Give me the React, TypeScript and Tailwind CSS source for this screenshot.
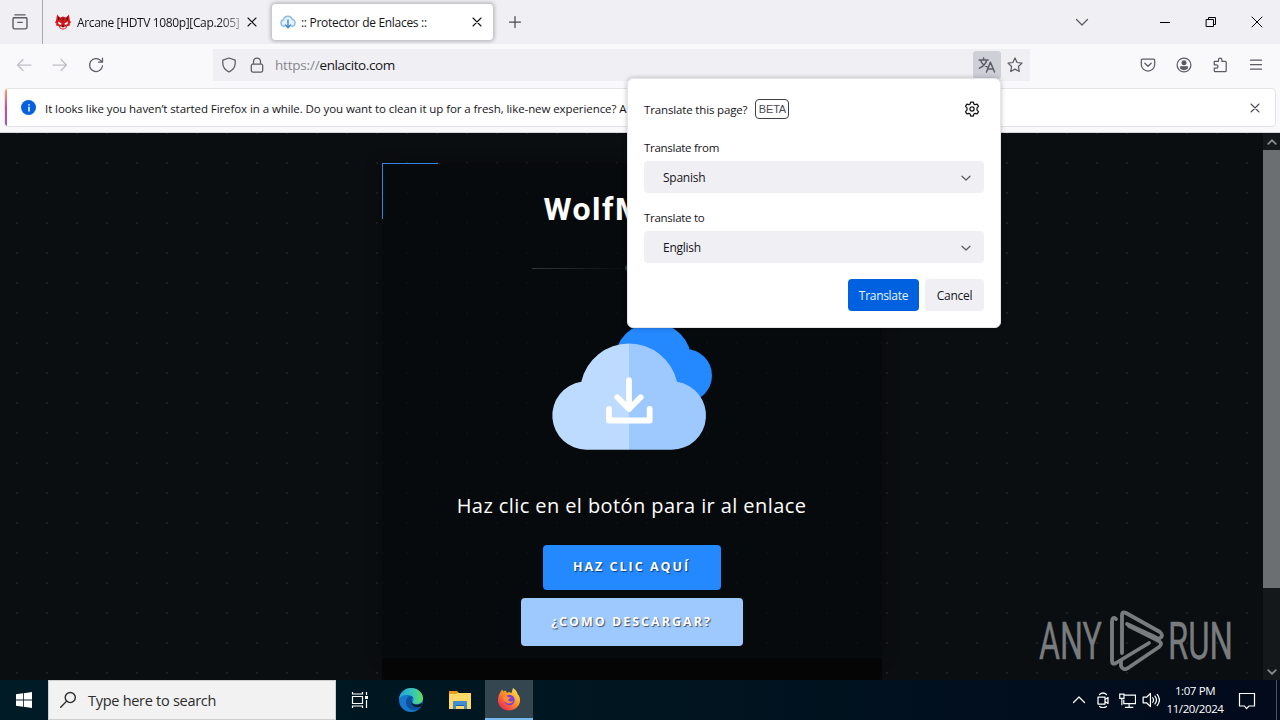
import type { ReactNode } from "react";

const uiFont = "font-['Open_Sans','Noto_Sans',sans-serif]";

function Icon({ size = 16, className = "", children }: { size?: number; className?: string; children: ReactNode }) {
  return (
    <svg
      width={size}
      height={size}
      viewBox="0 0 16 16"
      fill="none"
      stroke="currentColor"
      strokeWidth="1.25"
      strokeLinecap="round"
      strokeLinejoin="round"
      className={`shrink-0 ${className}`}
    >
      {children}
    </svg>
  );
}

function CloseIcon({ size = 16 }: { size?: number }) {
  return (
    <Icon size={size}>
      <path d="M4 4l8 8M12 4l-8 8" strokeWidth="1.100" />
    </Icon>
  );
}

function WolfIcon() {
  return (
    <svg width="16" height="16" viewBox="0 0 16 16" className="shrink-0">
      <path d="M2 .5l3 3 3-1 3 1 3-3 .8 5.500L16 9l-1.500.5.5 2-2.500.5L11 14.500l-3 1.300-3-1.300L3.500 12 1 11.500l.5-2L0 9l1.200-3z" fill="#d0191e" />
      <path d="M3 7.500l3.500 2L6 11 3.500 10zM13 7.500l-3.500 2L10 11l2.500-1zM4.500 12.500l2 .3 1.500 1 1.500-1 2-.3-2 2H6.500z" fill="#fff" />
      <path d="M6.800 11.500h2.400L8 13.200zM3 2.800l1.800 2L3 6.500zM13 2.800l-1.800 2 1.800 1.700zM7.500 4h1l-.5 4z" fill="#3d0a0c" />
    </svg>
  );
}

function CloudFavicon() {
  return (
    <svg width="16" height="16" viewBox="0 0 16 16" className="shrink-0" fill="none" strokeLinecap="round">
      <path d="M4.500 12.200H4A3.300 3.300 0 0 1 3.500 5.700a4.600 4.600 0 0 1 8.800-.3 3.500 3.500 0 0 1 .2 6.800h-1" stroke="#8dbcec" strokeWidth="1.400" fill="#eaf3fd" />
      <path d="M8 6v7M5.500 11L8 13.700l2.500-2.700" stroke="#3f86d2" strokeWidth="1.400" />
    </svg>
  );
}

function TabBar() {
  return (
    <div className="flex h-[44px] shrink-0 bg-[#f0f0f4] text-[#15141a]">
      <div className="flex w-[43px] shrink-0 items-center justify-center border-r border-[#a9a9b0] pr-[2px] text-[#5b5b66]">
        <Icon size={18}>
          <path d="M3.500 1.700h9M2.200 4.200h11.600M3 4.200h10a1.200 1.200 0 0 1 1.200 1.200v7.200a1.500 1.500 0 0 1-1.500 1.500H3.300a1.500 1.500 0 0 1-1.500-1.500V5.400A1.200 1.200 0 0 1 3 4.200zM6 8.300h4" />
        </Icon>
      </div>
      <div className="flex w-[221px] shrink-0 items-center pl-[12px]">
        <WolfIcon />
        <div className="ml-[6px] w-[167px] pt-[2px] text-[12px] tracking-[-0.36px] whitespace-nowrap [mask-image:linear-gradient(to_right,black_142px,rgba(0,0,0,0.25)_166px)]">
          Arcane [HDTV 1080p][Cap.205] |
        </div>
        <CloseIcon />
      </div>
      <div className="my-[3px] ml-[7px] flex w-[223px] shrink-0 items-center rounded-[4px] border border-[#c8c8ce] bg-white pl-[8px] shadow-[0_0_4px_rgba(0,0,0,0.3)]">
        <CloudFavicon />
        <div className="ml-[5px] w-[168px] pt-[2px] text-[12px] tracking-[-0.3px] whitespace-nowrap">
          :: Protector de Enlaces ::
        </div>
        <CloseIcon />
      </div>
      <div className="flex w-[42px] items-center justify-center text-[#4a4a52]">
        <Icon>
          <path d="M8 2.500v11M2.500 8h11" />
        </Icon>
      </div>
      <div className="ml-auto flex items-center">
        <div className="mr-[67px] text-[#5b5b66]">
          <Icon>
            <path d="M2.500 5.500L8 11l5.500-5.500" />
          </Icon>
        </div>
        <div className="flex gap-[30px] pr-[15px] text-black">
          <Icon>
            <path d="M3 8.500h10" strokeWidth="1" strokeLinecap="butt" />
          </Icon>
          <Icon>
            <path d="M3.500 5.500h7v7h-7zM5.500 5.500v-2h7v7h-2" strokeWidth="1" strokeLinejoin="miter" />
          </Icon>
          <Icon>
            <path d="M3 3l10 10M13 3L3 13" strokeWidth="1" />
          </Icon>
        </div>
      </div>
    </div>
  );
}

function NavBar() {
  return (
    <div className="flex h-[42px] shrink-0 items-center bg-[#f9f9fb] text-[#5b5b66]">
      <div className="flex w-[213px] shrink-0 items-center gap-[20px] pl-[16px]">
        <Icon className="text-[#bfbfc6]">
          <path d="M15 8H1.500M7 2.500L1.500 8 7 13.500" />
        </Icon>
        <Icon className="text-[#bfbfc6]">
          <path d="M1 8h13.500M9 2.500L14.500 8 9 13.500" />
        </Icon>
        <Icon>
          <path d="M14.500 8.800a6.500 6.500 0 1 1-1.900-5.400L14.300 5M14.500 1.200v4h-4" />
        </Icon>
      </div>
      <div className="flex h-[32px] w-[817px] shrink-0 items-center bg-[#f0f0f4] pl-[8px]">
        <Icon>
          <path d="M8 1L1.800 3.200v3.300c0 4 2.500 6.500 6.200 8.500 3.700-2 6.200-4.500 6.200-8.500V3.200z" />
        </Icon>
        <Icon className="ml-[12px]">
          <path d="M3.700 7.200h8.600a1.400 1.400 0 0 1 1.400 1.400v5a1.400 1.400 0 0 1-1.400 1.400H3.700a1.400 1.400 0 0 1-1.400-1.400v-5a1.400 1.400 0 0 1 1.400-1.400zM4.500 7V4.500a3.500 3.500 0 0 1 7 0V7" />
        </Icon>
        <p className="ml-[10px] text-[13.500px] tracking-[-0.2px] text-[#85858e]">
          https://<span className="tracking-[-0.4px] text-[#15141a]">enlacito.com</span>
        </p>
        <div className="ml-auto flex h-[28px] w-[28px] items-center justify-center rounded-[3px] bg-[#cfcfd8]">
          <Icon size={18}>
            <path d="M1 3.500h8M5 1.800v1.700M2.300 3.500c.7 3 3 5 5.700 6M7.800 3.500C7 7 4.500 9.500 1.300 10.800M7.500 14.200L11 5.500l3.700 8.700M8.700 11.500h4.800" strokeWidth="1.350" />
          </Icon>
        </div>
        <div className="flex w-[29px] justify-center pr-[2px]">
          <Icon>
            <path d="M8 1l2.100 4.500 4.900.6-3.600 3.400.9 5L8 12.100l-4.300 2.400.9-5L1 6.100l4.900-.6z" />
          </Icon>
        </div>
      </div>
      <div className="ml-auto flex items-center gap-[20px] pr-[16px]">
        <Icon>
          <path d="M2.500 2.200h11a1.200 1.200 0 0 1 1.200 1.200v4a6.700 6.700 0 0 1-13.400 0v-4a1.200 1.200 0 0 1 1.200-1.200zM4.800 6.200L8 9.300l3.200-3.100" />
        </Icon>
        <Icon>
          <circle cx="8" cy="8" r="6.900" />
          <circle cx="8" cy="5.700" r="1.900" fill="currentColor" />
          <path d="M4.500 9.800h7c0 1.800-1.500 2.700-3.500 2.700s-3.500-.9-3.500-2.700z" fill="currentColor" />
        </Icon>
        <Icon>
          <path d="M2.300 4.300H6.500V2.800a1.700 1.700 0 0 1 3.400 0v1.500h3.300a1 1 0 0 1 1 1v8.400a1 1 0 0 1-1 1H3.300a1 1 0 0 1-1-1v-2.500h2a1.700 1.700 0 0 0 0-3.400h-2z" />
        </Icon>
        <Icon>
          <path d="M2.500 3.200h11M2.500 7.700h11M2.500 12.200h11" />
        </Icon>
      </div>
    </div>
  );
}

function NotificationBar() {
  return (
    <div className="h-[47px] shrink-0 border-b border-[#d5d5da] bg-[#f9f9fb] px-[4px] pt-[2px] pb-[5px]">
      <div className="flex h-[39px] overflow-hidden rounded-[4px] border border-[#e4e4e8] bg-white">
        <div className="w-[2px] shrink-0 bg-gradient-to-b from-[#f7a05e] via-[#d5478c] to-[#9059c8]" />
        <div className="flex min-w-0 flex-1 items-center pr-[12px] pl-[14px]">
          <div className="flex h-[15px] w-[15px] shrink-0 items-center justify-center rounded-full bg-[#0561e0] text-white">
            <Icon size={12}>
              <path d="M8 7v5M8 3.800v.2" strokeWidth="2" />
            </Icon>
          </div>
          <p className="ml-[9px] pt-[2px] text-[11.500px] tracking-[-0.08px] whitespace-nowrap text-[#15141a]">
            It looks like you haven’t started Firefox in a while. Do you want to clean it up for a fresh, like-new experience? A
          </p>
          <div className="ml-auto text-[#4a4a55]">
            <CloseIcon />
          </div>
        </div>
      </div>
    </div>
  );
}

function CloudDrawing() {
  return (
    <svg width="190" height="145" viewBox="0 0 190 145" className="shrink-0">
      <g fill="#2488ff">
        <circle cx="113" cy="46" r="38.500" />
        <circle cx="145.500" cy="60.500" r="26.500" />
      </g>
      <path d="M46.300 134.700a34.200 34.200 0 0 1-5-68 48.900 48.900 0 0 1 47.700-38.200v106.200z" fill="#bddaff" />
      <path d="M89 28.500a48.900 48.900 0 0 1 48 38.200 34.200 34.200 0 0 1-5.300 68H89z" fill="#9ec9ff" />
      <g fill="none" stroke="#fff" strokeWidth="5.800" strokeLinecap="round" strokeLinejoin="round">
        <path d="M89 65.200V94M77.300 82.300L89 94l11.700-11.700M69 94v11.500h40.700V94" />
      </g>
    </svg>
  );
}

function LinkPage() {
  return (
    <div className="flex h-[547px] shrink-0 overflow-hidden bg-[#0b0e11]">
      <div className="flex flex-1 justify-center bg-[radial-gradient(circle_at_15px_15px,#1b2024_0.8px,transparent_1.2px)] bg-[length:30px_30px] bg-[position:2px_15px] pt-[30px]">
        <div className="h-[517px] w-[500px]">
          <div className="flex h-[495px] flex-col items-center bg-[rgba(7,9,11,0.75)] shadow-[0_0_14px_rgba(0,0,0,0.35)]">
            <div className="h-0 w-full">
              <div className="h-[56px] w-[56px] border-t border-l border-[#3783d8]" />
            </div>
            <h1 className="mt-[25px] h-[42px] w-[176px] font-[Roboto,sans-serif] text-[32px] leading-[42px] font-bold tracking-[1.5px] whitespace-nowrap text-white">
              WolfM
            </h1>
            <div className="mt-[35px] flex w-[200px] items-center">
              <div className="h-px flex-1 bg-gradient-to-r from-[#34373a] to-[#0b0e11]" />
              <div className="mx-[3px] h-[6px] w-[14px] rounded-full bg-[#35383b]" />
              <div className="h-px flex-1 bg-gradient-to-l from-[#34373a] to-[#0b0e11]" />
            </div>
            <div className="mt-[44px] h-[145px] w-[184px]">
              <CloudDrawing />
            </div>
            <h2 className="mt-[30px] text-[20px] leading-[32px] font-medium tracking-[0.41px] whitespace-nowrap text-white">
              Haz clic en el botón para ir al enlace
            </h2>
            <button className="mt-[23px] h-[45px] w-[178px] shrink-0 rounded-[4px] bg-[#2488ff] text-[12.500px] font-bold tracking-[2px] text-white [text-shadow:1px_1px_1px_rgba(0,0,0,0.55)]">
              HAZ CLIC AQUÍ
            </button>
            <button className="mt-[8px] h-[48px] w-[222px] shrink-0 rounded-[4px] bg-[#9ec9ff] text-[12.500px] font-bold tracking-[2px] text-white [text-shadow:1px_1px_1px_rgba(0,0,0,0.6)]">
              ¿COMO DESCARGAR?
            </button>
          </div>
          <div className="h-[22px] bg-[#050505]" />
        </div>
      </div>
      <div className="flex w-[17px] shrink-0 flex-col items-center bg-[#15181b] text-[#85888b]">
        <div className="flex h-[17px] items-center">
          <Icon size={12}>
            <path d="M3 10.500l5-5 5 5" strokeWidth="2.500" />
          </Icon>
        </div>
        <div className="h-[438px] w-full bg-[#6c6f71]" />
        <div className="mt-auto flex h-[17px] items-center">
          <Icon size={12}>
            <path d="M3 5.500l5 5 5-5" strokeWidth="2.500" />
          </Icon>
        </div>
      </div>
    </div>
  );
}

function LanguageSelect({ label, value }: { label: string; value: string }) {
  return (
    <div>
      <p className="text-[11.500px] leading-[16px] tracking-[-0.28px]">{label}</p>
      <div className="mt-[5px] flex h-[32px] items-center justify-between rounded-[4px] bg-[#f0f0f4] pr-[10px] pl-[19px]">
        <span className="pt-[2px] text-[12px] tracking-[-0.25px]">{value}</span>
        <Icon className="mt-[1px] text-[#5b5b66]">
          <path d="M4 6.200L8 10l4-3.800" />
        </Icon>
      </div>
    </div>
  );
}

function TranslatePanel() {
  return (
    <div className="absolute top-[78px] left-[627px] h-[250px] w-[374px] rounded-[6px] border border-[#e6e6ea] bg-white px-[16px] pt-[15px] text-[#15141a] shadow-[0_0_5px_rgba(0,0,0,0.25)]">
      <div className="flex h-[30px] items-center">
        <p className="pt-[2px] text-[11.500px] tracking-[-0.15px]">Translate this page?</p>
        <span className="ml-[8px] flex h-[20px] w-[34px] items-center justify-center rounded-[4px] border border-[#3f3f46] font-['Liberation_Sans',sans-serif] text-[11px] tracking-[-0.2px] text-[#4a4a52]">
          BETA
        </span>
        <Icon className="mr-[4px] ml-auto">
          <path d="M6.700 1h2.600l.5 2 1.300.7 2-.6 1.400 2.300-1.500 1.500v2.200l1.500 1.500-1.400 2.300-2-.6-1.300.7-.5 2H6.700l-.5-2-1.300-.7-2 .6-1.400-2.300L3 9.100V6.900L1.500 5.400l1.400-2.300 2 .6L6.200 3z" />
          <circle cx="8" cy="8" r="2.100" />
        </Icon>
      </div>
      <div className="mt-[16px] flex flex-col gap-[17px]">
        <LanguageSelect label="Translate from" value="Spanish" />
        <LanguageSelect label="Translate to" value="English" />
      </div>
      <div className="mt-[16px] flex justify-end gap-[6px] text-[12px] tracking-[-0.3px]">
        <button className="h-[32px] w-[71px] rounded-[4px] bg-[#0061e0] pt-[2px] text-[#eaf4ff]">Translate</button>
        <button className="h-[32px] w-[59px] rounded-[4px] bg-[#f0f0f4] pt-[2px]">Cancel</button>
      </div>
    </div>
  );
}

function Watermark() {
  return (
    <svg width="196" height="64" viewBox="0 0 196 64" className="absolute top-[609px] left-[1039px]">
      <g fill="#797c7e" fontFamily="Roboto, sans-serif" fontSize="52" fontWeight="400" stroke="#797c7e" strokeWidth="0.400">
        <text x="0" y="50" textLength="63" lengthAdjust="spacingAndGlyphs">ANY</text>
        <text x="129" y="50" textLength="65" lengthAdjust="spacingAndGlyphs">RUN</text>
      </g>
      <g fill="none" stroke="#797c7e" strokeWidth="3.800" strokeLinejoin="round" strokeLinecap="round">
        <path d="M77 10q-4-3-4 3v39q0 4 4 2l33-20" />
        <path d="M83 44V6q0-4 4-2l34 19q4 4 0 6-3 1-5-1L88 15" />
        <path d="M82 52v5q2 5 7 2l31-21q4-3 0-6L90 17" />
      </g>
    </svg>
  );
}

function EdgeLogo() {
  return (
    <svg width="26" height="26" viewBox="0 0 26 26">
      <defs>
        <linearGradient id="edgeTop" x1="0" x2="1">
          <stop offset="0" stopColor="#249fe0" />
          <stop offset="0.600" stopColor="#35c9b5" />
          <stop offset="1" stopColor="#66dc55" />
        </linearGradient>
      </defs>
      <circle cx="13" cy="13" r="12" fill="#1677cd" />
      <path d="M1 12C2 5 7 1 13 1c7 0 12 5 12 10 0 4-3 6-7 6-3 0-4-1-3-3 2-3-1-6-5-6-4-.500-7 1-9 4z" fill="url(#edgeTop)" />
      <path d="M10 10c-4 4-2 12 5 13 3 .3 6-1 8-3-4 1-10-1-10-6 0-2 1-3 2-4-2-1-4-1-5 0z" fill="#0c4f9b" />
      <path d="M15 10.500c-2 1-2.500 5 .5 6.500 3 1.500 7 .5 9-2 0 1-.5 3-1.500 4.500-5 2-10-1-10-5 0-2 1-3.500 2-4z" fill="#001b25" />
    </svg>
  );
}

function FirefoxLogo() {
  return (
    <svg width="24" height="24" viewBox="0 0 24 24">
      <defs>
        <linearGradient id="foxFlame" x1="0.900" y1="0.100" x2="0.200" y2="0.900">
          <stop offset="0" stopColor="#ffe34a" />
          <stop offset="0.450" stopColor="#ff9528" />
          <stop offset="1" stopColor="#f0304f" />
        </linearGradient>
      </defs>
      <path d="M3.500 5l1.500-2.500 1.500 2 2-1L10 6l2-1 2.500 1L16 1c3 2 4 4 4.500 6 2 2 2.500 4 2.500 6.500C23 19 18 23.500 12 23.500S1 19 1 13.500C1 10 2 7 3.500 5z" fill="url(#foxFlame)" />
      <circle cx="12.500" cy="13" r="5.200" fill="#7b41dc" />
      <path d="M6 9c2-1 4 0 5 1l3 .5-2.500 2c-1 2 3 3 5 1-1 4-8 4-10-1z" fill="#ff8b2a" />
    </svg>
  );
}

function TaskBar() {
  return (
    <div className="flex h-[40px] shrink-0 bg-gradient-to-r from-[#001b25] via-[#001520] to-[#020a1c] text-white">
      <div className="flex w-[48px] shrink-0 items-center justify-center">
        <svg width="16" height="16" viewBox="0 0 16 16" fill="#fff">
          <path d="M0 2.300L7 1.300v6.300H0zM7.800 1.200L16 0v7.600H7.800zM0 8.400h7v6.300l-7-1zM7.800 8.400H16V16l-8.200-1.200z" />
        </svg>
      </div>
      <div className="flex w-[288px] shrink-0 items-center border border-[#cfcfcf] bg-[#f2f2f2] pl-[10px] text-[#2c2c2c]">
        <Icon size={18}>
          <circle cx="10" cy="5.800" r="4.500" />
          <path d="M6.800 9L1.500 14.500" />
        </Icon>
        <span className="ml-[11px] pt-[2px] text-[14.500px] tracking-[-0.28px] whitespace-nowrap">Type here to search</span>
      </div>
      <div className="flex w-[48px] items-center justify-center">
        <svg width="18" height="18" viewBox="0 0 18 18" fill="none" stroke="#fff" strokeWidth="1.200">
          <path d="M1.500 5.500h10v7h-10zM1.500 1v2h10V1M1.500 17v-2h10v2M15.500 1v3M15.500 9v8" />
          <path d="M14 5h3v3h-3z" fill="#fff" stroke="none" />
        </svg>
      </div>
      <div className="flex w-[53px] items-center justify-center">
        <EdgeLogo />
      </div>
      <div className="flex w-[48px] items-center justify-center pr-[2px]">
        <svg width="22" height="20" viewBox="0 0 22 20">
          <path d="M0 1h8l2 2h12v5H0z" fill="#e89c1d" />
          <path d="M0 4h7l2-1h13v16H0z" fill="#ffd867" />
          <path d="M4 11h14v8h-3v-4H7v4H4z" fill="#3f8fce" />
          <path d="M7 15h8v1H7z" fill="#1e62a5" />
        </svg>
      </div>
      <div className="flex w-[48px] items-center justify-center border-b-2 border-[#76b9ed] bg-[#344751]">
        <FirefoxLogo />
      </div>
      <div className="ml-auto flex items-center">
        <div className="flex items-center gap-[8px]">
          <Icon>
            <path d="M2.500 10.500L8 5l5.500 5.500" />
          </Icon>
          <Icon>
            <path d="M3 5h7v7H3zM10 7.500l3-2v6l-3-2M4.500 2.500Q8-.500 11.500 2.500M4.500 14.500q3.500 2.500 7 0" />
          </Icon>
          <Icon size={17}>
            <path d="M5 3h10.500v8H4.500V7.500M9.500 11v3.500M6 14.500h7M.7 2h4v4h-4zM2.700 6v6" strokeWidth="1.100" strokeLinejoin="miter" />
          </Icon>
          <Icon size={18} className="ml-[-2px]">
            <path d="M1 5.500h3l3.500-3.300v11.600L4 10.500H1zM9.500 6q1.500 2 0 4M11.500 4.500q2.800 3.500 0 7M13.500 3q4 5 0 10" strokeWidth="1.100" />
          </Icon>
        </div>
        <div className="ml-[6px] w-[58px] text-center text-[11.500px] leading-[18px] tracking-[-0.4px] whitespace-nowrap">
          <p>1:07 PM</p>
          <p className="mx-[-4px]">11/20/2024</p>
        </div>
        <svg width="18" height="18" viewBox="0 0 18 18" fill="none" stroke="#fff" strokeWidth="1.200" className="mt-[1px] mr-[20px] ml-[14px]">
          <path d="M1.500 1.500h15V14H11l-2.500 2.500L6.500 14h-5z" />
        </svg>
        <div className="mr-[3px] h-[40px] w-px bg-[#4a5360]" />
      </div>
    </div>
  );
}

export default function App() {
  return (
    <main className={`relative flex h-[720px] w-[1280px] flex-col overflow-hidden ${uiFont}`}>
      <TabBar />
      <NavBar />
      <NotificationBar />
      <LinkPage />
      <TaskBar />
      <TranslatePanel />
      <Watermark />
    </main>
  );
}
